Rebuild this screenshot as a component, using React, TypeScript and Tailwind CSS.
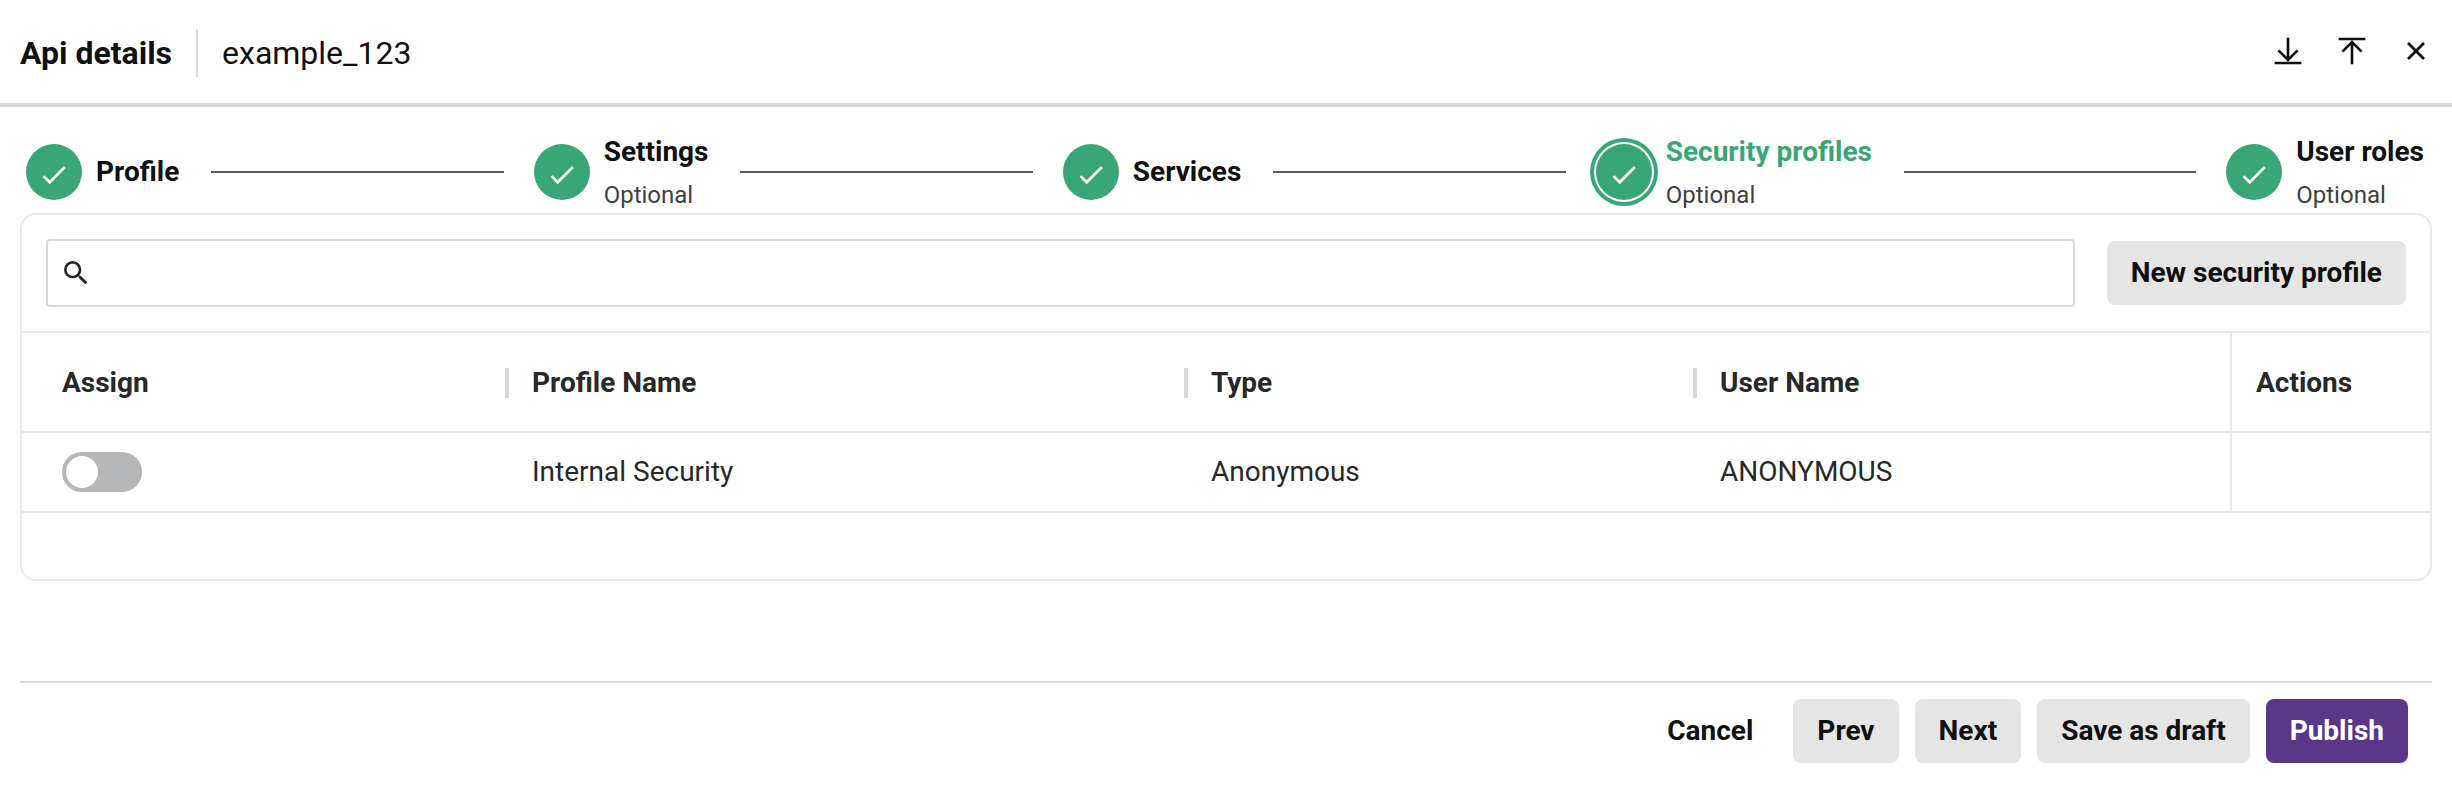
import { Fragment } from "react";
import clsx from "clsx";

const steps = [
  { label: "Profile" },
  { label: "Settings", optional: true },
  { label: "Services" },
  { label: "Security profiles", optional: true, active: true },
  { label: "User roles", optional: true },
];

const columns = ["Assign", "Profile Name", "Type", "User Name"];

const rows = [{ assigned: false, name: "Internal Security", type: "Anonymous", user: "ANONYMOUS" }];

const gridCols = "grid grid-cols-[487px_679px_509px_533px_1fr]";

function HeaderIcon({ d }: { d: string }) {
  return (
    <button className="h-8 w-8">
      <svg viewBox="0 0 24 24" className="h-8 w-8" fill="none" stroke="currentColor" strokeWidth="2">
        <path d={d} />
      </svg>
    </button>
  );
}

function Button({ children, variant = "secondary" }: { children: string; variant?: string }) {
  return (
    <button
      className={clsx(
        "h-16 shrink-0 rounded-lg px-6 text-[28px] leading-[64px] font-bold whitespace-nowrap",
        variant === "primary" && "bg-[#5b3788] text-white",
        variant === "secondary" && "bg-[#e5e5e5]"
      )}
    >
      {children}
    </button>
  );
}

function Step({ label, optional, active }: { label: string; optional?: boolean; active?: boolean }) {
  return (
    <div className="flex shrink-0 items-center gap-3.5">
      <div
        className={clsx(
          "h-14 w-14 rounded-full bg-[#38a775]",
          active && "ring-4 ring-[#38a775] ring-offset-2 ring-offset-white"
        )}
      >
        <svg viewBox="0 0 56 56" className="h-14 w-14" fill="none" stroke="white" strokeWidth="2.7">
          <path d="M17.6 32.1l6.1 6.2 15.2-15.3" />
        </svg>
      </div>
      <div className={clsx("whitespace-nowrap", optional ? "pt-0.5" : "pb-0.5")}>
        <p className={clsx("text-[28px] leading-[41px] font-bold", active && "text-[#38a775]")}>{label}</p>
        {optional && <p className="mt-[3px] text-2xl leading-10 text-[#404141]">Optional</p>}
      </div>
    </div>
  );
}

export default function App() {
  return (
    <div className="h-[794px] w-full bg-white font-['Roboto',sans-serif] text-[#0f1010]">
      <header className="flex h-[107px] items-center justify-between border-b-4 border-[#d7d9db] px-5">
        <div className="flex items-center pt-0.5 text-[32px] leading-[48px]">
          <h1 className="font-bold">Api details</h1>
          <div className="mx-6 h-12 w-0.5 bg-[#d7d8d9]" />
          <span>example_123</span>
        </div>
        <div className="flex gap-8 pb-px">
          <HeaderIcon d="M12 2v17M4.8 11.5l7.2 7.2 7.2-7.2M2 21h20" />
          <HeaderIcon d="M12 22V5M4.8 12.5l7.2-7.2 7.2 7.2M2 3h20" />
          <HeaderIcon d="M6 6l12 12M18 6L6 18" />
        </div>
      </header>

      <nav className="flex h-[106px] items-center pr-7 pl-[26px] pt-6">
        {steps.map((step, i) => (
          <Fragment key={step.label}>
            {i > 0 && <div className="mr-[30px] ml-8 h-0.5 flex-1 bg-[#5a5b5b]" />}
            <Step {...step} />
          </Fragment>
        ))}
      </nav>

      <section className="mx-5 h-[368px] rounded-2xl border-2 border-[#e7e8e9]">
        <div className="flex h-[116px] items-center gap-8 px-6">
          <div className="flex h-[68px] flex-1 items-center rounded border-2 border-[#d7d8d9] px-3">
            <svg viewBox="0 0 24 24" className="h-8 w-8" fill="#222323">
              <path d="M15.5 14h-.79l-.28-.27A6.471 6.471 0 0 0 16 9.5 6.5 6.5 0 1 0 9.5 16c1.61 0 3.09-.59 4.23-1.57l.27.28v.79l5 4.99L20.49 19l-4.99-5zm-6 0C7.01 14 5 11.99 5 9.5S7.01 5 9.5 5 14 7.01 14 9.5 11.99 14 9.5 14z" />
            </svg>
          </div>
          <Button>New security profile</Button>
        </div>

        <div className="text-[28px] text-[#272828]">
          <div className={clsx(gridCols, "h-[102px] border-y-2 border-[#e7e8e9] leading-[96px] font-bold")}>
            {columns.map((column, i) => (
              <div
                key={column}
                className={clsx("flex items-center justify-between pt-0.5", i === 0 ? "pl-10" : "pl-[23px]")}
              >
                <span>{column}</span>
                {i < columns.length - 1 && <div className="h-[30px] w-1 bg-[#d7d8d9]" />}
              </div>
            ))}
            <div className="border-l-2 border-[#e7e8e9] pt-0.5 pl-6">Actions</div>
          </div>
          {rows.map((row) => (
            <div key={row.name} className={clsx(gridCols, "h-20 border-b-2 border-[#e7e8e9] leading-[78px]")}>
              <div className="flex items-center pl-10">
                <div className={clsx("flex h-10 w-20 rounded-full bg-[#b4b6b7] p-1", row.assigned && "justify-end")}>
                  <div className="h-8 w-8 rounded-full bg-white" />
                </div>
              </div>
              <div className="pl-[23px]">{row.name}</div>
              <div className="pl-[23px]">{row.type}</div>
              <div className="pl-[23px]">{row.user}</div>
              <div className="border-l-2 border-[#e7e8e9]" />
            </div>
          ))}
        </div>
      </section>

      <footer className="mx-5 mt-[100px] flex justify-end gap-4 border-t-2 border-[#d7d8d9] pt-4 pr-6">
        <Button variant="text">Cancel</Button>
        <Button>Prev</Button>
        <Button>Next</Button>
        <Button>Save as draft</Button>
        <Button variant="primary">Publish</Button>
      </footer>
    </div>
  );
}
